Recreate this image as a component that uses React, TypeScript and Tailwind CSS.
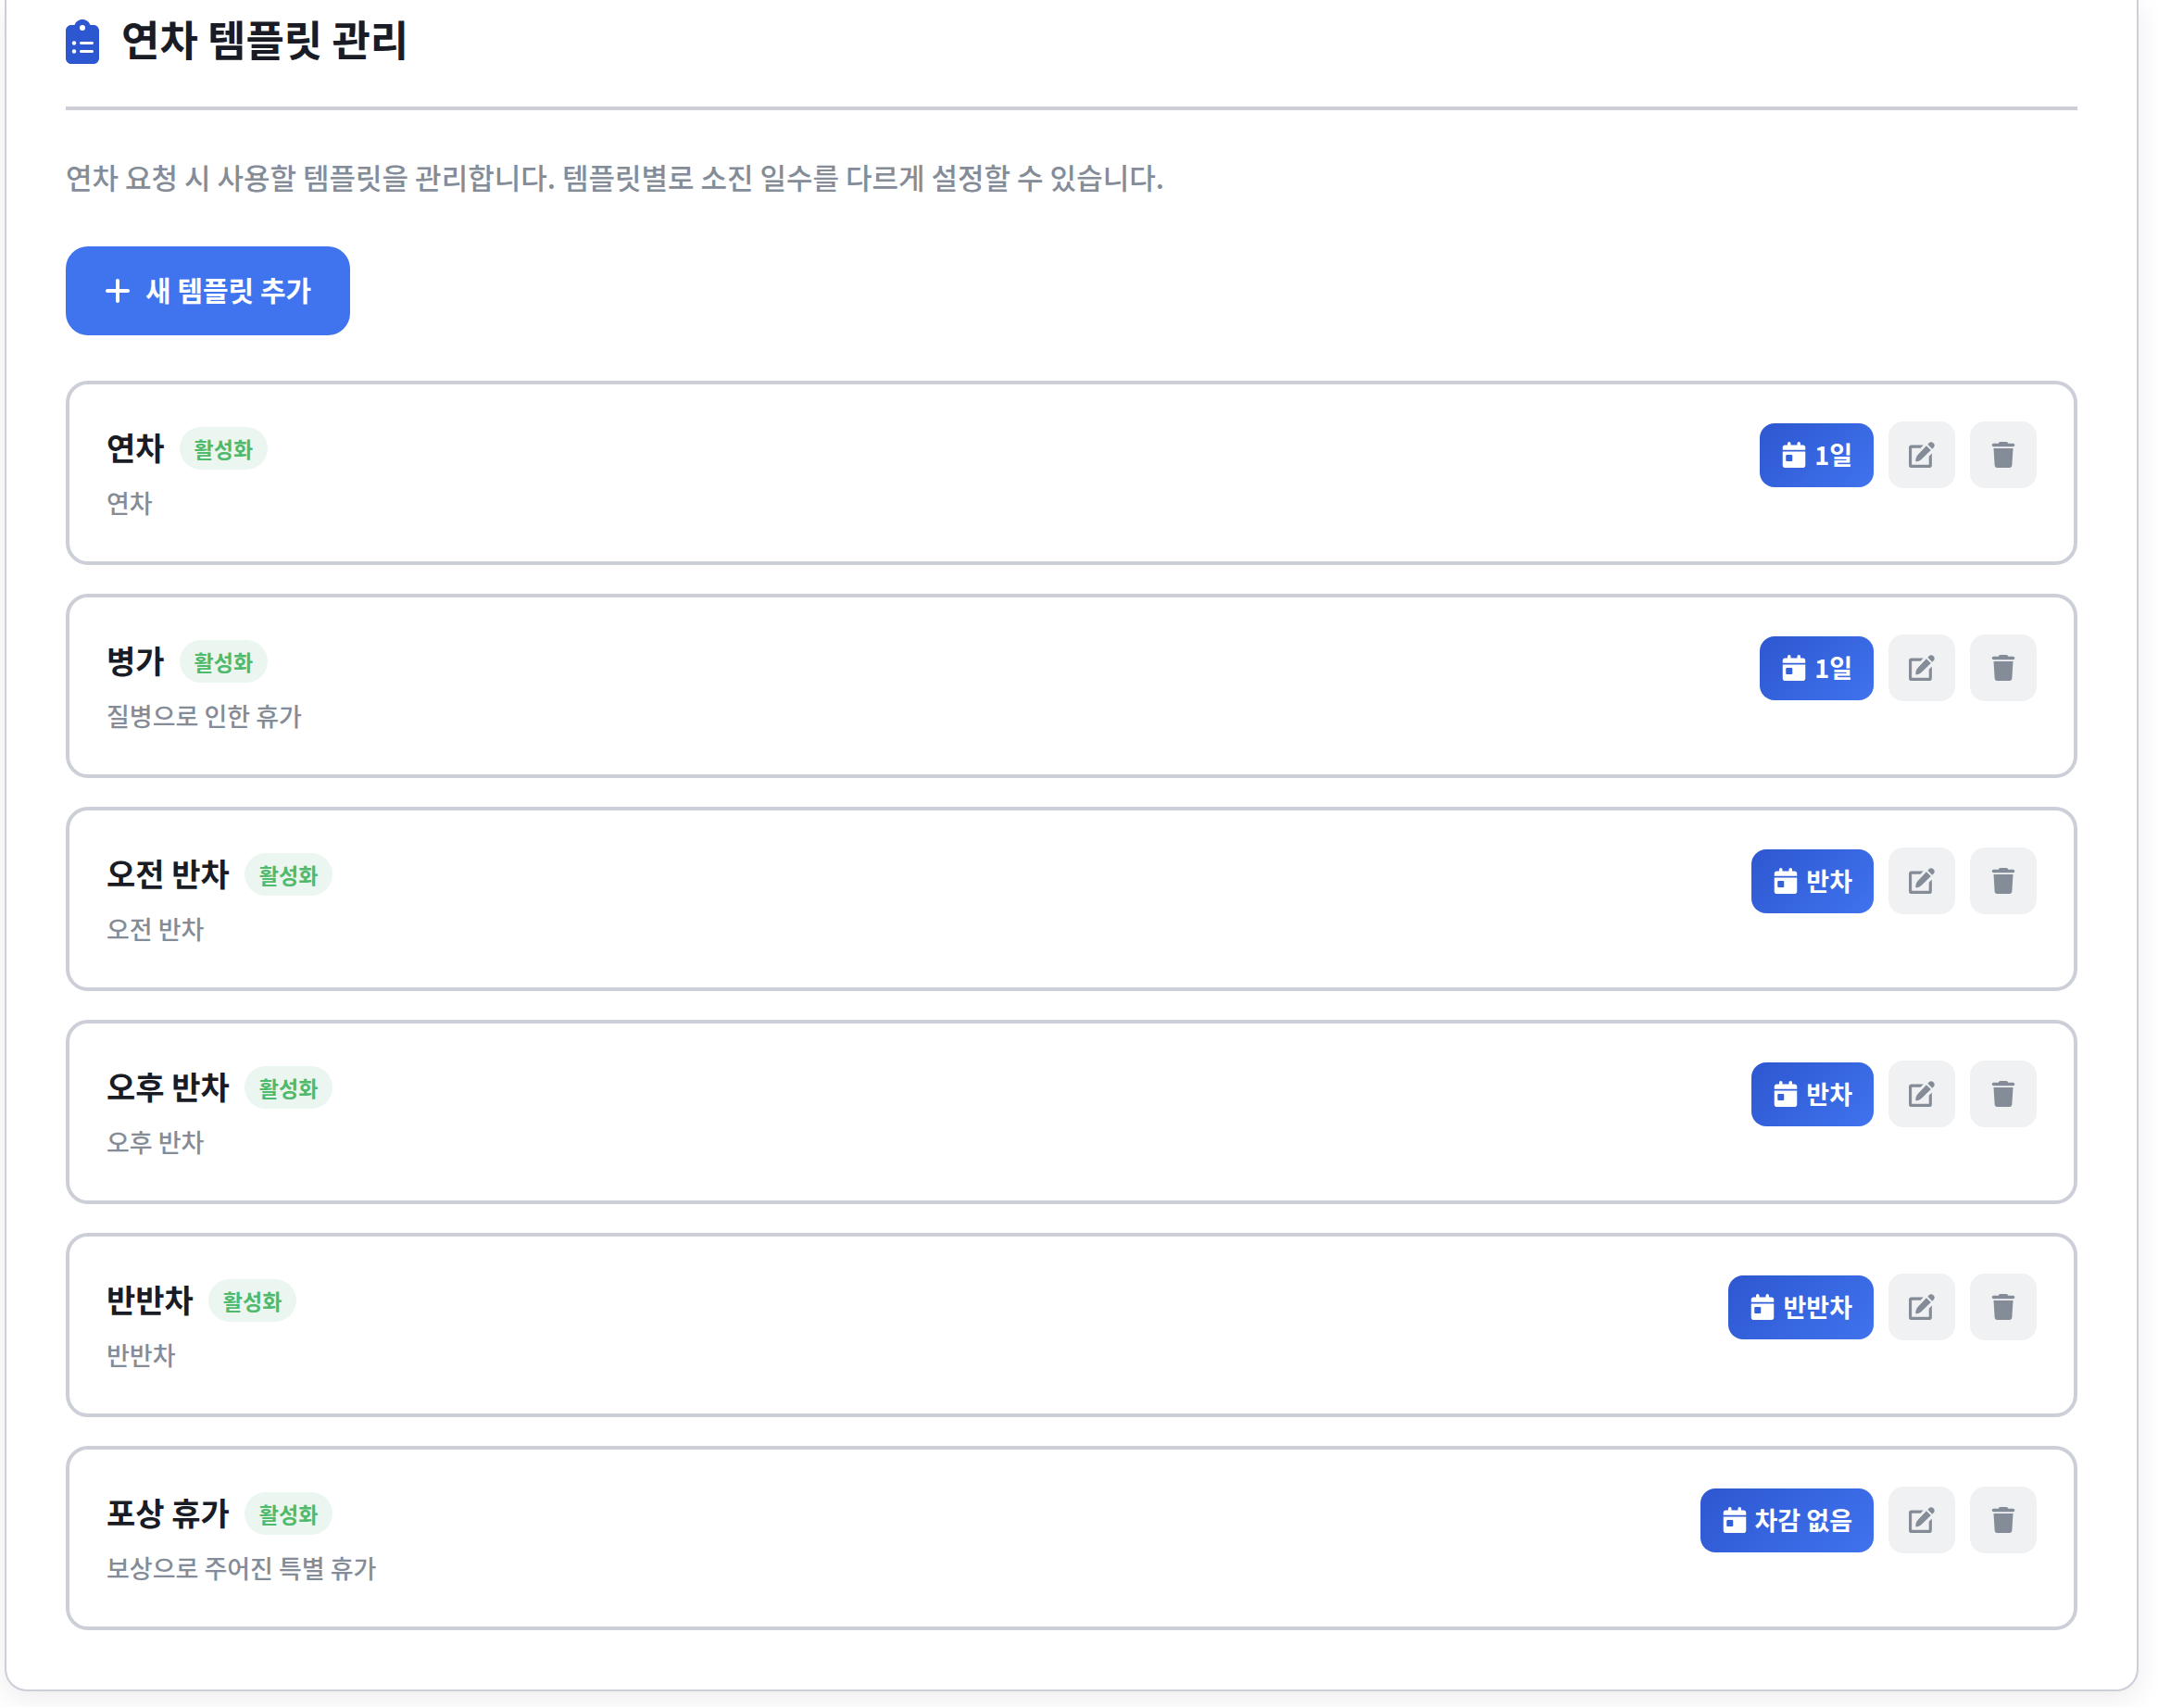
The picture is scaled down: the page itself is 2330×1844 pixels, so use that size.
import clsx from 'clsx';
import { FaCalendarDay, FaClipboardList, FaPlus, FaTrash } from 'react-icons/fa6';

interface LeaveTemplate {
  id: number;
  name: string;
  description: string;
  deduction: string;
  active: boolean;
}

const templates: LeaveTemplate[] = [
  { id: 1, name: '연차', description: '연차', deduction: '1일', active: true },
  { id: 2, name: '병가', description: '질병으로 인한 휴가', deduction: '1일', active: true },
  { id: 3, name: '오전 반차', description: '오전 반차', deduction: '반차', active: true },
  { id: 4, name: '오후 반차', description: '오후 반차', deduction: '반차', active: true },
  { id: 5, name: '반반차', description: '반반차', deduction: '반반차', active: true },
  { id: 6, name: '포상 휴가', description: '보상으로 주어진 특별 휴가', deduction: '차감 없음', active: true },
];

const iconButton =
  'flex size-[72px] items-center justify-center rounded-2xl bg-[#f0f1f3] text-[#848c98] hover:bg-gray-200';

function EditIcon() {
  return (
    <svg viewBox="0 0 80 80" className="size-7" fill="currentColor" aria-hidden="true">
      <path d="M8 10H45L36 19H11Q9 19 9 21V69Q9 71 11 71H60Q62 71 62 69V45L71 36V72Q71 80 63 80H8Q0 80 0 72V18Q0 10 8 10Z" />
      <path d="M54 12L68 26L40 53Q36 57 31 59L25 61Q20 62 21 57L22 50Q23 46 27 41Z" />
      <path d="M58 8L63 3Q69-2 76 4Q82 10 77 17L72 22Z" />
    </svg>
  );
}

function TemplateCard({ template }: { template: LeaveTemplate }) {
  return (
    <li className="flex items-start justify-between rounded-3xl border-4 border-[#cccfd7] px-10 pt-10 pb-[41px]">
      <div className="flex flex-col gap-2">
        <div className="flex h-[58px] items-center gap-4">
          <h3 className="pb-1 text-[34px] font-bold text-[#191c24]">{template.name}</h3>
          <span
            className={clsx(
              'flex h-[46px] items-center rounded-full px-4 text-[23px] font-bold',
              template.active ? 'bg-[#ebf6f0] text-[#4fb96c]' : 'bg-gray-100 text-gray-500'
            )}
          >
            {template.active ? '활성화' : '비활성화'}
          </span>
        </div>
        <p className="text-[27px] leading-[44px] font-medium text-[#848c98]">{template.description}</p>
      </div>

      <div className="flex items-center gap-4">
        <span className="flex h-[69px] items-center gap-2 rounded-2xl bg-linear-135 from-[#2d57d0] to-[#4073ee] px-[23px] text-[27px] font-bold text-white">
          <FaCalendarDay className="h-7 w-auto" />
          {template.deduction}
        </span>
        <button type="button" aria-label={`${template.name} 수정`} className={iconButton}>
          <EditIcon />
        </button>
        <button type="button" aria-label={`${template.name} 삭제`} className={iconButton}>
          <FaTrash className="h-7 w-auto" />
        </button>
      </div>
    </li>
  );
}

export default function App() {
  return (
    <main className="overflow-hidden bg-white pr-[21px] pb-[17px] pl-[5px] font-['Noto_Sans_CJK_KR',sans-serif]">
      <section className="rounded-b-3xl border-2 border-t-0 border-[#cccfd7] bg-white px-16 pb-16 shadow-[0_8px_32px_rgba(0,0,0,0.08)]">
        <header className="flex h-[119px] items-start gap-6 border-b-4 border-[#cccfd7] pt-2">
          <FaClipboardList className="mt-[13px] h-12 w-9 text-[#2d57d0]" />
          <h2 className="text-[45px] leading-[68px] font-bold text-[#191c24]">연차 템플릿 관리</h2>
        </header>

        <p className="mt-[46px] text-[31px] leading-[51px] font-medium text-[#848c98]">
          연차 요청 시 사용할 템플릿을 관리합니다. 템플릿별로 소진 일수를 다르게 설정할 수 있습니다.
        </p>

        <button
          type="button"
          className="mt-[50px] flex h-24 items-center gap-4 rounded-3xl bg-[#4073ee] px-[42px] text-[30px] font-bold text-white hover:bg-[#2d57d0]"
        >
          <FaPlus className="h-8 w-7" />
          <span className="pb-1">새 템플릿 추가</span>
        </button>

        <ul className="mt-[49px] flex flex-col gap-[31px]">
          {templates.map((template) => (
            <TemplateCard key={template.id} template={template} />
          ))}
        </ul>
      </section>
    </main>
  );
}
